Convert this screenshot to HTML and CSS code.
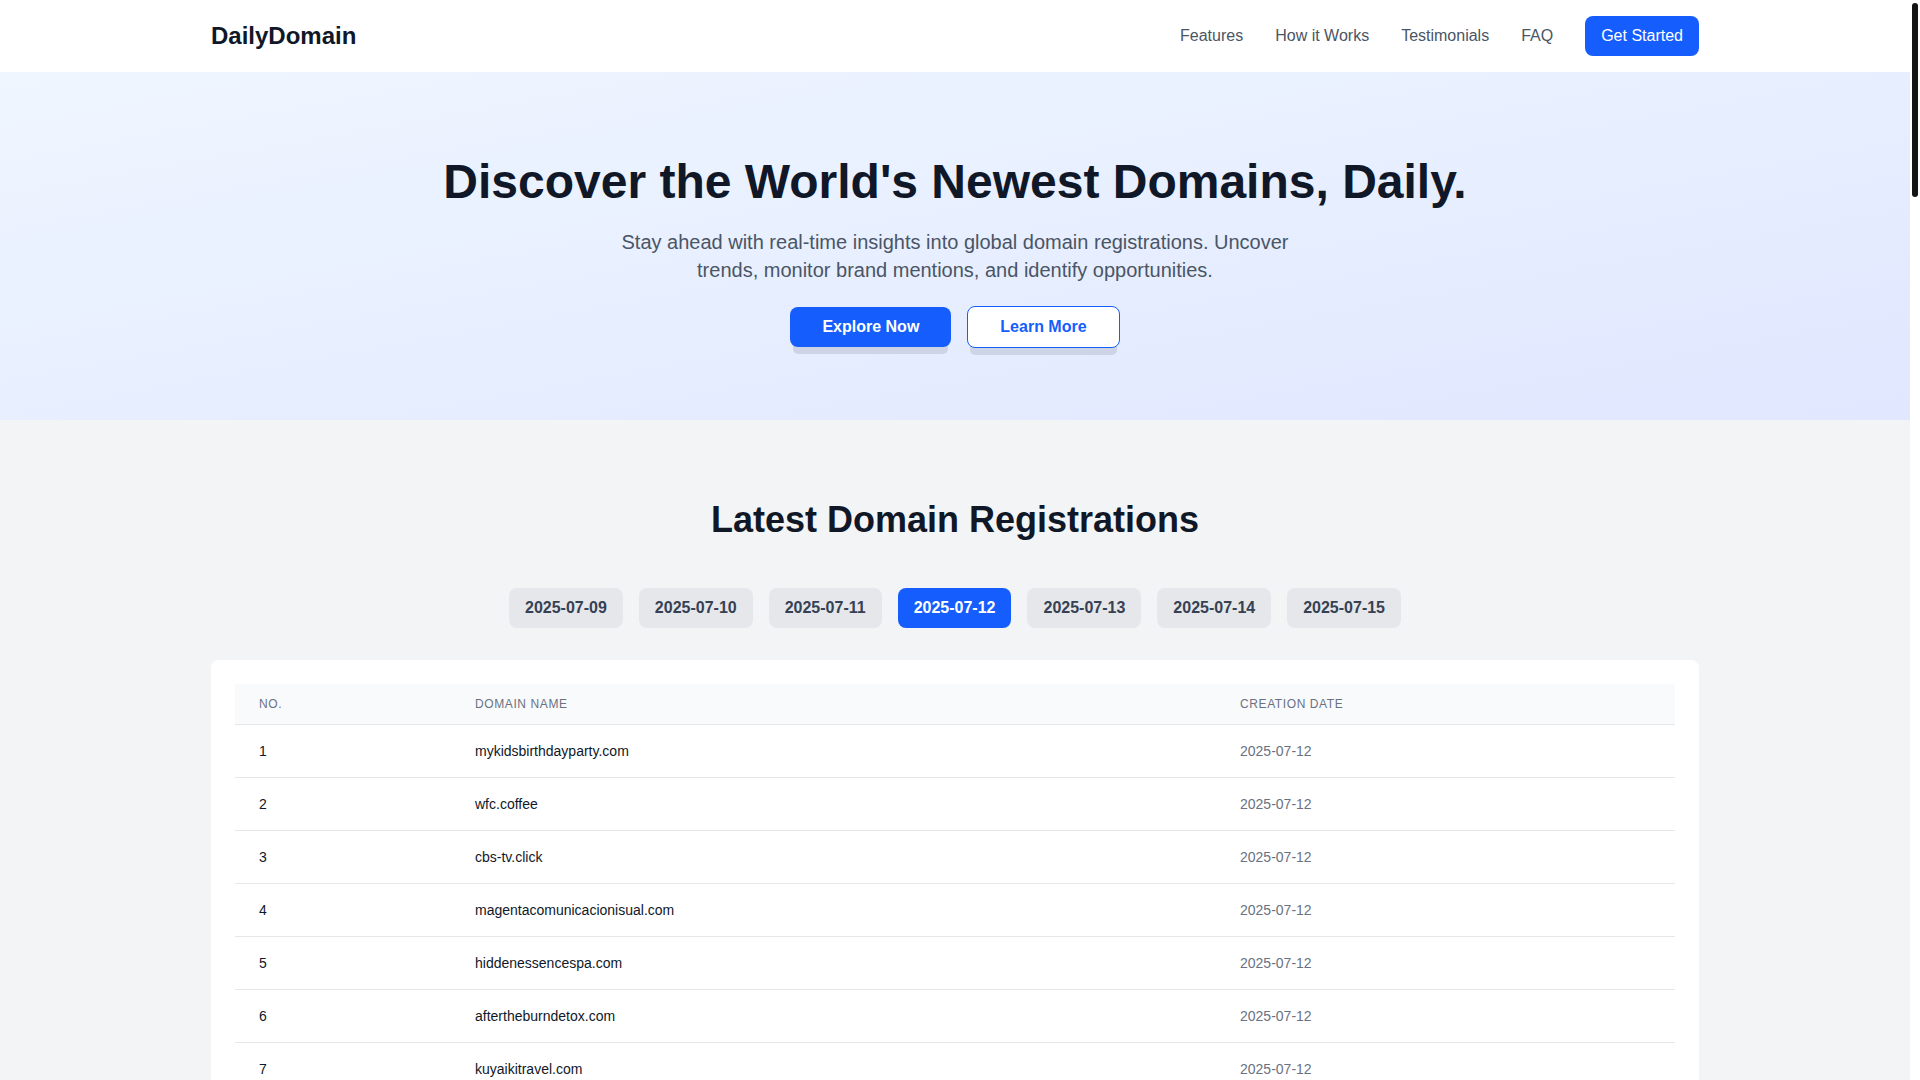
FILE: index.html
```html
<!DOCTYPE html>
<html lang="en">
<head>
<meta charset="utf-8">
<title>DailyDomain - Discover the World's Newest Domains, Daily.</title>
<link rel="stylesheet" href="styles.css">
</head>
<body>
<div class="scroll-thumb" aria-hidden="true"></div>
<header class="site-header">
  <div class="container header-inner">
    <a class="logo" href="#">DailyDomain</a>
    <nav class="nav">
      <a class="nav-link" href="#features">Features</a>
      <a class="nav-link" href="#how">How it Works</a>
      <a class="nav-link" href="#testimonials">Testimonials</a>
      <a class="nav-link" href="#faq">FAQ</a>
      <a class="btn-start" href="#">Get Started</a>
    </nav>
  </div>
</header>

<section class="hero">
  <div class="container hero-inner">
    <h1 class="hero-title">Discover the World's Newest Domains, Daily.</h1>
    <p class="hero-subtitle">Stay ahead with real-time insights into global domain registrations. Uncover trends, monitor brand mentions, and identify opportunities.</p>
    <div class="hero-actions">
      <a class="hero-btn hero-btn-primary" href="#latest">Explore Now</a>
      <a class="hero-btn hero-btn-outline" href="#features">Learn More</a>
    </div>
  </div>
</section>

<section class="latest" id="latest">
  <div class="container">
    <h2 class="section-title">Latest Domain Registrations</h2>
    <div class="date-tabs">
      <button class="date-tab">2025-07-09</button>
      <button class="date-tab">2025-07-10</button>
      <button class="date-tab">2025-07-11</button>
      <button class="date-tab is-active">2025-07-12</button>
      <button class="date-tab">2025-07-13</button>
      <button class="date-tab">2025-07-14</button>
      <button class="date-tab">2025-07-15</button>
    </div>
    <div class="table-card">
      <table class="domain-table">
        <colgroup>
          <col class="col-no">
          <col class="col-domain">
          <col class="col-date">
        </colgroup>
        <thead>
          <tr>
            <th>No.</th>
            <th>Domain Name</th>
            <th>Creation Date</th>
          </tr>
        </thead>
        <tbody>
          <tr><td>1</td><td>mykidsbirthdayparty.com</td><td class="cell-date">2025-07-12</td></tr>
          <tr><td>2</td><td>wfc.coffee</td><td class="cell-date">2025-07-12</td></tr>
          <tr><td>3</td><td>cbs-tv.click</td><td class="cell-date">2025-07-12</td></tr>
          <tr><td>4</td><td>magentacomunicacionisual.com</td><td class="cell-date">2025-07-12</td></tr>
          <tr><td>5</td><td>hiddenessencespa.com</td><td class="cell-date">2025-07-12</td></tr>
          <tr><td>6</td><td>aftertheburndetox.com</td><td class="cell-date">2025-07-12</td></tr>
          <tr><td>7</td><td>kuyaikitravel.com</td><td class="cell-date">2025-07-12</td></tr>
          <tr><td>8</td><td>greenleafbakery.shop</td><td class="cell-date">2025-07-12</td></tr>
          <tr><td>9</td><td>nordicpixel.studio</td><td class="cell-date">2025-07-12</td></tr>
          <tr><td>10</td><td>sunsetyogaretreat.com</td><td class="cell-date">2025-07-12</td></tr>
          <tr><td>11</td><td>blueharborlogistics.net</td><td class="cell-date">2025-07-12</td></tr>
          <tr><td>12</td><td>tinycloudlabs.io</td><td class="cell-date">2025-07-12</td></tr>
          <tr><td>13</td><td>urbanfernplants.com</td><td class="cell-date">2025-07-12</td></tr>
          <tr><td>14</td><td>maplecrestdental.com</td><td class="cell-date">2025-07-12</td></tr>
          <tr><td>15</td><td>quickbytecafe.online</td><td class="cell-date">2025-07-12</td></tr>
          <tr><td>16</td><td>silverpinecabins.com</td><td class="cell-date">2025-07-12</td></tr>
          <tr><td>17</td><td>brightpathtutors.org</td><td class="cell-date">2025-07-12</td></tr>
          <tr><td>18</td><td>oceanviewrentals.co</td><td class="cell-date">2025-07-12</td></tr>
          <tr><td>19</td><td>redfoxdesigns.art</td><td class="cell-date">2025-07-12</td></tr>
          <tr><td>20</td><td>luminaskincare.store</td><td class="cell-date">2025-07-12</td></tr>
        </tbody>
      </table>
    </div>
  </div>
</section>

<section class="info-section" id="features">
  <div class="container">
    <h2 class="section-title">Features</h2>
    <div class="card-grid">
      <div class="info-card"><h3 class="info-card-title">Daily Updates</h3><p class="info-card-text">Fresh lists of newly registered domains every single day.</p></div>
      <div class="info-card"><h3 class="info-card-title">Brand Monitoring</h3><p class="info-card-text">Spot registrations that mention your brand or keywords.</p></div>
      <div class="info-card"><h3 class="info-card-title">Trend Insights</h3><p class="info-card-text">Discover which extensions and topics are growing fastest.</p></div>
    </div>
  </div>
</section>

<section class="info-section info-alt" id="how">
  <div class="container">
    <h2 class="section-title">How it Works</h2>
    <div class="card-grid">
      <div class="info-card"><h3 class="info-card-title">1. Collect</h3><p class="info-card-text">We gather registration data from global registries.</p></div>
      <div class="info-card"><h3 class="info-card-title">2. Organize</h3><p class="info-card-text">Domains are sorted by creation date for easy browsing.</p></div>
      <div class="info-card"><h3 class="info-card-title">3. Explore</h3><p class="info-card-text">Pick a date and explore the newest domains instantly.</p></div>
    </div>
  </div>
</section>

<section class="info-section" id="testimonials">
  <div class="container">
    <h2 class="section-title">Testimonials</h2>
    <div class="card-grid">
      <div class="info-card"><p class="info-card-text">"An essential tool for keeping an eye on our brand."</p></div>
      <div class="info-card"><p class="info-card-text">"I find great domain ideas here every morning."</p></div>
      <div class="info-card"><p class="info-card-text">"Simple, fast and always up to date."</p></div>
    </div>
  </div>
</section>

<section class="info-section info-alt" id="faq">
  <div class="container">
    <h2 class="section-title">FAQ</h2>
    <div class="faq-list">
      <div class="info-card"><h3 class="info-card-title">How often is the data updated?</h3><p class="info-card-text">Every day.</p></div>
      <div class="info-card"><h3 class="info-card-title">Which extensions are covered?</h3><p class="info-card-text">Generic and many new top-level domains.</p></div>
    </div>
  </div>
</section>

<footer class="site-footer">
  <div class="container">
    <p class="footer-text">© 2025 DailyDomain. All rights reserved.</p>
  </div>
</footer>
</body>
</html>
```

FILE: styles.css
```css
* {
  box-sizing: border-box;
}

html, body {
  margin: 0;
  padding: 0;
}

html {
  background: #ffffff;
}

body {
  margin-right: 10px;
  font-family: "Liberation Sans", Arial, Helvetica, sans-serif;
  color: #101828;
  background: #f3f4f6;
  -webkit-font-smoothing: antialiased;
}

/* scrollbar thumb drawn over the right gutter */
.scroll-thumb {
  position: fixed;
  top: 3px;
  right: 2px;
  width: 6px;
  height: 194px;
  border-radius: 3px;
  background: #141414;
  z-index: 10;
}

a {
  text-decoration: none;
}

.container {
  max-width: 1536px;
  margin: 0 auto;
  padding: 0 24px;
}

/* Header */
.site-header {
  background: #ffffff;
}

.header-inner {
  display: flex;
  align-items: center;
  justify-content: space-between;
  padding-top: 16px;
  padding-bottom: 16px;
}

.logo {
  font-size: 24px;
  line-height: 32px;
  font-weight: 700;
  color: #101828;
}

.nav {
  display: flex;
  align-items: center;
  gap: 32px;
}

.nav-link {
  font-size: 16px;
  line-height: 24px;
  color: #4a5565;
}

.btn-start {
  display: inline-block;
  background: #155dfc;
  color: #ffffff;
  font-size: 16px;
  line-height: 24px;
  padding: 8px 16px;
  border-radius: 8px;
}

/* Hero */
.hero {
  background: linear-gradient(to bottom right, #eff6ff, #e0e7ff);
  padding: 80px 0 72px;
}

.hero-inner {
  text-align: center;
}

.hero-title {
  margin: 0 0 16px;
  font-size: 48px;
  line-height: 60px;
  font-weight: 700;
  color: #101828;
}

.hero-subtitle {
  margin: 0 auto 22px;
  max-width: 672px;
  font-size: 20px;
  line-height: 28px;
  color: #4a5565;
}

.hero-actions {
  display: flex;
  justify-content: center;
  align-items: center;
  gap: 16px;
}

.hero-btn {
  display: inline-block;
  font-size: 16px;
  line-height: 24px;
  font-weight: 700;
  padding: 8px 32px;
  border-radius: 8px;
  box-shadow: 0 10px 0 -3px rgba(0, 0, 0, 0.1);
}

.hero-btn-primary {
  background: #155dfc;
  color: #ffffff;
}

.hero-btn-outline {
  background: #ffffff;
  color: #155dfc;
  border: 1px solid #155dfc;
}

/* Latest registrations */
.latest {
  background: #f3f4f6;
  padding: 80px 0;
}

.section-title {
  margin: 0 0 48px;
  text-align: center;
  font-size: 36px;
  line-height: 40px;
  font-weight: 700;
  color: #101828;
}

.date-tabs {
  display: flex;
  justify-content: center;
  gap: 16px;
  margin-bottom: 32px;
}

.date-tab {
  font-family: inherit;
  font-size: 16px;
  line-height: 24px;
  font-weight: 700;
  padding: 8px 16px;
  border: none;
  border-radius: 8px;
  background: #e5e7eb;
  color: #364153;
  cursor: pointer;
}

.date-tab.is-active {
  background: #155dfc;
  color: #ffffff;
}

.table-card {
  background: #ffffff;
  border-radius: 8px;
  padding: 24px;
}

.domain-table {
  width: 100%;
  border-collapse: collapse;
  table-layout: fixed;
}

.col-no {
  width: 216px;
}

.col-domain {
  width: 765px;
}

.domain-table thead tr {
  background: #f9fafb;
}

.domain-table th {
  padding: 12px 24px;
  text-align: left;
  font-size: 12px;
  line-height: 16px;
  font-weight: 500;
  text-transform: uppercase;
  letter-spacing: 0.05em;
  color: #6a7282;
}

.domain-table tbody tr {
  border-top: 1px solid #e5e7eb;
}

.domain-table td {
  padding: 16px 24px;
  font-size: 14px;
  line-height: 20px;
  color: #101828;
  white-space: nowrap;
}

.domain-table td.cell-date {
  color: #6a7282;
}

/* Below-the-fold sections */
.info-section {
  background: #ffffff;
  padding: 160px 0;
}

.info-alt {
  background: #f3f4f6;
}

.card-grid {
  display: grid;
  grid-template-columns: repeat(3, 1fr);
  gap: 32px;
}

.faq-list {
  display: flex;
  flex-direction: column;
  gap: 24px;
  max-width: 896px;
  margin: 0 auto;
}

.info-card {
  background: #ffffff;
  border: 1px solid #e5e7eb;
  border-radius: 8px;
  padding: 48px 32px;
}

.info-card-title {
  margin: 0 0 12px;
  font-size: 20px;
  line-height: 28px;
  color: #101828;
}

.info-card-text {
  margin: 0;
  font-size: 16px;
  line-height: 24px;
  color: #4a5565;
}

.site-footer {
  background: #101828;
  padding: 48px 0;
}

.footer-text {
  margin: 0;
  text-align: center;
  color: #99a1af;
  font-size: 14px;
  line-height: 20px;
}
```
